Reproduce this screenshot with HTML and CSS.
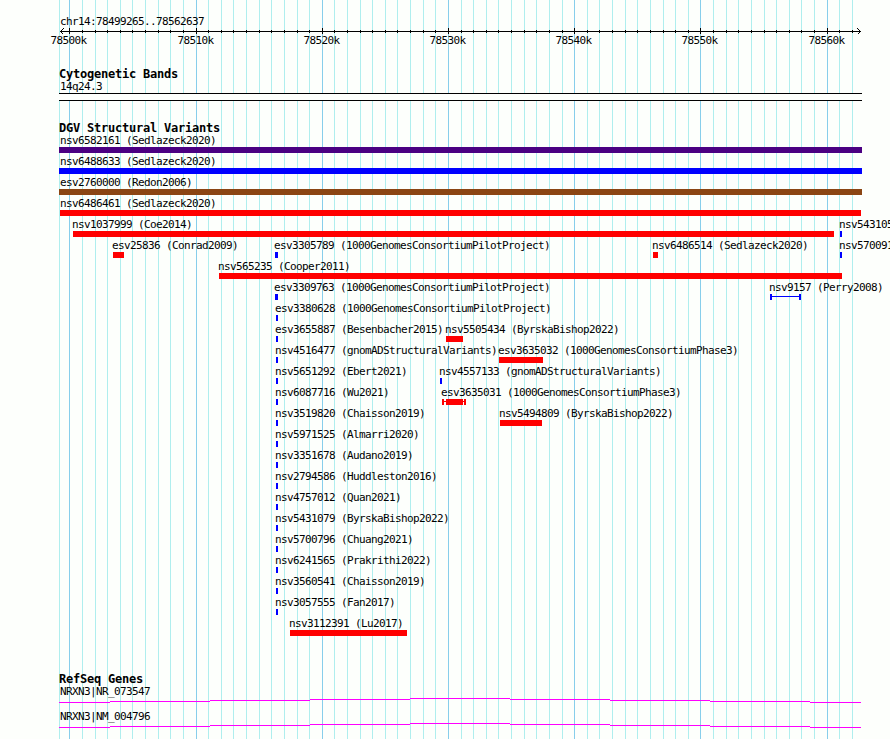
FILE: index.html
```
<!DOCTYPE html>
<html>
<head lang="en">
    <meta charset="UTF-8">
    <title>DGV Structural Variants</title>
    <link rel="stylesheet" href="styles.css">
</head>
<body>

<div id="browser">
    <svg id="grid" width="890" height="739" shape-rendering="crispEdges"></svg>

    <div id="scale">
        <p class="label">chr14:78499265..78562637</p>
        <svg id="ruler" width="890" height="6" shape-rendering="crispEdges"></svg>
        <div id="ticks"></div>
    </div>

    <div class="track">
        <h2>Cytogenetic Bands</h2>
        <p class="label">14q24.3</p>
        <div class="band"></div>
    </div>

    <div class="track variants">
        <h2>DGV Structural Variants</h2>
        <div id="rows"></div>
    </div>

    <div class="track">
        <h2>RefSeq Genes</h2>
        <div class="gene">
            <p class="label">NRXN3|NR_073547</p>
            <svg class="intron" width="890" height="12" shape-rendering="crispEdges"></svg>
        </div>
        <div class="gene">
            <p class="label">NRXN3|NM_004796</p>
            <svg class="intron" width="890" height="12" shape-rendering="crispEdges"></svg>
        </div>
    </div>
</div>
<script src="tracks.js"></script>
</body>
</html>
```
FILE: styles.css
```
* {
    margin: 0;
    padding: 0;
}

body {
    background: #fdfffc;
    color: #000;
    font-family: "DejaVu Sans Mono", monospace;
    font-size: 11px;
    line-height: 13px;
}

svg {
    display: block;
}

#browser {
    position: relative;
    width: 890px;
    height: 739px;
    overflow: hidden;
}

#grid {
    position: absolute;
    left: 0;
    top: 0;
    z-index: -1;
}

.label {
    height: 13px;
    padding-left: 60px;
    letter-spacing: -0.622px;
    white-space: pre;
}

h2 {
    height: 13px;
    padding-left: 59px;
    font-size: 12px;
    font-weight: bold;
    line-height: 14px;
    letter-spacing: -0.224px;
    white-space: pre;
}

#scale {
    height: 52px;
    padding-top: 15px;
}

#ticks {
    position: relative;
    height: 13px;
}

#ticks span {
    position: absolute;
    letter-spacing: -0.622px;
}

.track {
    margin-bottom: 20px;
}

.variants {
    margin-bottom: 34px;
}

.band {
    width: 803px;
    height: 6px;
    margin-left: 59px;
    background: #fdfffc;
    border-top: 1px solid #000;
    border-bottom: 1px solid #000;
}

.row {
    position: relative;
    height: 21px;
}

/* features sit at their place on the chromosome */
.row .label {
    position: absolute;
    top: 0;
    padding-left: 0;
}

.bar {
    position: absolute;
    top: 13px;
    height: 6px;
}

.red {
    color: #f00;
    background: currentColor;
}

.blue {
    color: #00f;
    background: currentColor;
}

.indigo {
    background: #4b0082;
}

.brown {
    background: #8b4513;
}

.range {
    box-sizing: border-box;
    border-left: 2px solid;
    border-right: 2px solid;
    background: linear-gradient(currentColor, currentColor) 0 2px / 100% 1px no-repeat;
}

.gene {
    height: 25px;
}
```
FILE: tracks.js
```
var oGrid = document.getElementById("grid");
var oRuler = document.getElementById("ruler");
var oTicks = document.getElementById("ticks");
var oRows = document.getElementById("rows");
var aIntron = document.getElementsByClassName("intron");

function rect(x, y, w, h, color) {
    return '<rect x="' + x + '" y="' + y + '" width="' + w + '" height="' + h + '" fill="' + color + '"/>';
}

// grid and ruler, one line per kb
var start = 78499265;
var scale = 800 / 63373;
var grid = rect(59, 0, 1, 739, "#afeeee");
var major = "";
var ruler = rect(60, 3, 801, 1, "#000");
for (var kb = 78500; kb <= 78562; kb++) {
    var x = Math.round(60 + (kb * 1000 - start) * scale);
    if (kb % 10 == 0) {
        major += rect(x, 0, 1, 739, "#87ceeb");
        ruler += rect(x, 0, 1, 6, "#000");
        oTicks.innerHTML += '<span style="left:' + (x - 18.5) + 'px">' + kb + 'k</span>';
    } else {
        grid += rect(x, 0, 1, 739, "#afeeee");
        ruler += rect(x, 2, 1, 3, "#000");
    }
}
// arrow heads
for (var i = 1; i < 4; i++) {
    ruler += rect(60 + i, 3 - i, 1, 1, "#000") + rect(60 + i, 3 + i, 1, 1, "#000");
    ruler += rect(860 - i, 3 - i, 1, 1, "#000") + rect(860 - i, 3 + i, 1, 1, "#000");
}
oGrid.innerHTML = grid + major;
oRuler.innerHTML = ruler;

// name, label x, bar x, bar width, color
var rows = [
    [["nsv6582161 (Sedlazeck2020)", 60, 59, 803, "indigo"]],
    [["nsv6488633 (Sedlazeck2020)", 60, 59, 803, "blue"]],
    [["esv2760000 (Redon2006)", 60, 59, 803, "brown"]],
    [["nsv6486461 (Sedlazeck2020)", 60, 60, 801, "red"]],
    [["nsv1037999 (Coe2014)", 72, 73, 761, "red"], ["nsv543105", 839, 840, 2, "blue"]],
    [["esv25836 (Conrad2009)", 112, 113, 11, "red"], ["esv3305789 (1000GenomesConsortiumPilotProject)", 274, 275, 3, "blue"],
        ["nsv6486514 (Sedlazeck2020)", 652, 653, 5, "red"], ["nsv570091", 839, 840, 2, "blue"]],
    [["nsv565235 (Cooper2011)", 218, 219, 623, "red"]],
    [["esv3309763 (1000GenomesConsortiumPilotProject)", 274, 275, 3, "blue"], ["nsv9157 (Perry2008)", 769, 770, 31, "blue range"]],
    [["esv3380628 (1000GenomesConsortiumPilotProject)", 275, 276, 2, "blue"]],
    [["esv3655887 (Besenbacher2015)", 275, 276, 2, "blue"], ["nsv5505434 (ByrskaBishop2022)", 445, 446, 17, "red"]],
    [["nsv4516477 (gnomADStructuralVariants)", 275, 276, 2, "blue"], ["esv3635032 (1000GenomesConsortiumPhase3)", 498, 499, 44, "red"]],
    [["nsv5651292 (Ebert2021)", 275, 276, 2, "blue"], ["nsv4557133 (gnomADStructuralVariants)", 439, 440, 2, "blue"]],
    [["nsv6087716 (Wu2021)", 275, 276, 2, "blue"], ["esv3635031 (1000GenomesConsortiumPhase3)", 441, 442, 24, "red range"], ["", 445, 446, 17, "red"]],
    [["nsv3519820 (Chaisson2019)", 275, 276, 2, "blue"], ["nsv5494809 (ByrskaBishop2022)", 499, 500, 42, "red"]],
    [["nsv5971525 (Almarri2020)", 275, 276, 2, "blue"]],
    [["nsv3351678 (Audano2019)", 275, 276, 2, "blue"]],
    [["nsv2794586 (Huddleston2016)", 275, 276, 2, "blue"]],
    [["nsv4757012 (Quan2021)", 275, 276, 2, "blue"]],
    [["nsv5431079 (ByrskaBishop2022)", 275, 276, 2, "blue"]],
    [["nsv5700796 (Chuang2021)", 275, 276, 2, "blue"]],
    [["nsv6241565 (Prakrithi2022)", 275, 276, 2, "blue"]],
    [["nsv3560541 (Chaisson2019)", 275, 276, 2, "blue"]],
    [["nsv3057555 (Fan2017)", 275, 276, 2, "blue"]],
    [["nsv3112391 (Lu2017)", 289, 290, 117, "red"]]
];
var html = "";
for (var i = 0; i < rows.length; i++) {
    html += '<div class="row">';
    for (var j = 0; j < rows[i].length; j++) {
        var f = rows[i][j];
        if (f[0]) {
            html += '<p class="label" style="left:' + f[1] + 'px">' + f[0] + '</p>';
        }
        html += '<div class="bar ' + f[4] + '" style="left:' + f[2] + 'px;width:' + f[3] + 'px"></div>';
    }
    html += '</div>';
}
oRows.innerHTML = html;

// the intron rises one pixel every 100px up to the middle
var steps = [59, 110, 210, 310, 410, 510, 610, 710, 810, 861];
var line = "";
for (var i = 0; i < steps.length - 1; i++) {
    line += rect(steps[i], Math.abs(4 - i), steps[i + 1] - steps[i], 1, "#f0f");
}
for (var i = 0; i < aIntron.length; i++) {
    aIntron[i].innerHTML = line;
}
```
